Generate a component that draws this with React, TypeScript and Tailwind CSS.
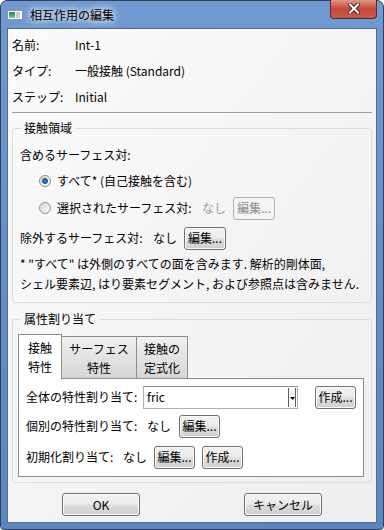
import React from 'react';

const Btn: React.FC<{ label: string; className?: string; disabled?: boolean }> = ({ label, className = '', disabled }) => (
  <button
    disabled={disabled}
    className={
      disabled
        ? `flex h-[23px] items-center justify-center rounded-[3px] border border-[#adb2b5] bg-[#f4f4f4] text-[#8d8d8d] ${className}`
        : `flex h-[23px] items-center justify-center rounded-[3px] border border-[#707070] bg-[linear-gradient(#f2f2f2_0%,#ebebeb_48%,#dddddd_52%,#cfcfcf_100%)] shadow-[inset_0_0_0_1px_#fbfbfb] ${className}`
    }
  >
    {label}
  </button>
);

const Radio: React.FC<{ checked?: boolean }> = ({ checked }) => (
  <span className="flex h-[12px] w-[12px] items-center justify-center rounded-full border border-[#8e8f8f] bg-linear-to-br from-[#d8d8d8] to-[#fbfbfb]">
    {checked && <span className="h-[6px] w-[6px] rounded-full border border-[#16487e] bg-[#2f7ac4]" />}
  </span>
);

const Tab: React.FC<{ top: string; bottom: string; active?: boolean; className?: string }> = ({ top, bottom, active, className = '' }) => (
  <div
    className={
      active
        ? `relative z-10 mb-[-1px] flex h-[45px] flex-col items-center justify-center border border-b-0 border-[#898c95] bg-white leading-[19px] ${className}`
        : `flex h-[42px] flex-col items-center justify-center border-t border-r border-[#898c95] bg-linear-to-b from-[#f0f0f0] to-[#d6d6d6] leading-[19px] ${className}`
    }
  >
    <span>{top}</span>
    <span>{bottom}</span>
  </div>
);

export default function App() {
  return (
    <div className="h-[530px] w-[384px] font-['Noto_Sans_CJK_JP',sans-serif] text-[12px] text-black">
      <div className="flex h-full flex-col rounded-t-[7px] rounded-b-[4px] border border-[#30415a] bg-linear-to-b from-[#7199d1] to-[#5b84c1] px-[6px] pb-[6px]">
        {/* Title bar */}
        <div className="flex h-[27px] items-center">
          <div className="flex h-[10px] w-[16px] gap-[1px] border border-[#8797ad] bg-white p-[1px]">
            <span className="w-[6px] bg-linear-to-b from-[#2b7f6a] to-[#7cc0a8]" />
            <span className="w-[4px] bg-[#c3c9d2]" />
          </div>
          <span className="ml-[7px] [text-shadow:0_0_6px_#ffffff,0_0_10px_#ffffff]">相互作用の編集</span>
          <div className="mt-[-2px] ml-auto flex h-[20px] w-[47px] items-center justify-center self-start rounded-b-[4px] border border-t-0 border-[#5a2b2b] bg-linear-to-b from-[#e5a090] via-[#c8473a] to-[#c75a48]">
            <svg width="12" height="11" viewBox="0 0 12 11">
              <path d="M2 1.5 L10 9.5 M10 1.5 L2 9.5" stroke="#4a2424" strokeWidth="4" strokeLinecap="square" />
              <path d="M2 1.5 L10 9.5 M10 1.5 L2 9.5" stroke="#ffffff" strokeWidth="2" strokeLinecap="square" />
            </svg>
          </div>
        </div>

        {/* Client */}
        <div className="flex flex-1 flex-col border border-[#566a89] bg-linear-to-br from-[#fbfbfb] to-[#eeeeee] px-[4px] pt-[3px]">
          <div className="flex h-[26px] items-center">
            <span className="w-[63px]">名前:</span>
            <span>Int-1</span>
          </div>
          <div className="flex h-[26px] items-center">
            <span className="w-[63px]">タイプ:</span>
            <span>一般接触 (Standard)</span>
          </div>
          <div className="flex h-[26px] items-center">
            <span className="w-[63px]">ステップ:</span>
            <span>Initial</span>
          </div>
          <div className="mt-[2px] h-px bg-[#a0a0a0]" />

          {/* 接触領域 */}
          <fieldset className="mt-[7px] rounded-[3px] border border-[#d5dfe5]">
            <legend className="ml-[8px] px-[3px] leading-[16px]">接触領域</legend>
            <div className="pt-[6px] pb-[8px] pl-[7px]">
              <div className="flex h-[26px] items-center">含めるサーフェス対:</div>
              <div className="flex h-[26px] items-center pl-[19px]">
                <Radio checked />
                <span className="ml-[6px]">すべて* (自己接触を含む)</span>
              </div>
              <div className="flex h-[28px] items-center pl-[19px]">
                <Radio />
                <span className="ml-[6px] w-[145px]">選択されたサーフェス対:</span>
                <span className="w-[31px] text-[#a0a0a0]">なし</span>
                <Btn label="編集..." disabled className="w-[42px]" />
              </div>
              <div className="flex h-[32px] items-center">
                <span className="w-[133px]">除外するサーフェス対:</span>
                <span className="w-[31px]">なし</span>
                <Btn label="編集..." className="w-[42px]" />
              </div>
              <div className="leading-[20px]">
                <div>* "すべて" は外側のすべての面を含みます. 解析的剛体面,</div>
                <div>シェル要素辺, はり要素セグメント, および参照点は含みません.</div>
              </div>
            </div>
          </fieldset>

          {/* 属性割り当て */}
          <fieldset className="mt-[8px] rounded-[3px] border border-[#d5dfe5]">
            <legend className="ml-[8px] px-[3px] leading-[16px]">属性割り当て</legend>
            <div className="pt-[7px] pr-[7px] pb-[5px] pl-[5px]">
              <div className="flex items-end">
                <Tab top="接触" bottom="特性" active className="w-[44px]" />
                <Tab top="サーフェス" bottom="特性" className="w-[75px]" />
                <Tab top="接触の" bottom="定式化" className="w-[51px]" />
              </div>
              <div className="h-[99px] border border-[#898c95] bg-white pt-[6px] pl-[7px]">
                <div className="flex h-[24px] items-center">
                  <span className="w-[117px]">全体の特性割り当て:</span>
                  <div className="flex h-[23px] w-[155px] items-center justify-between border border-[#abadb3] border-t-[#8e8f8f] bg-white pl-[3px] pr-[1px]">
                    <span>fric</span>
                    <span className="flex h-[19px] w-[8px] items-center justify-center border-x border-[#5f5f5f] bg-[#f7f7f7]">
                      <svg width="5" height="4" viewBox="0 0 5 4" className="mt-[4px]">
                        <path d="M0 0 L5 0 L2.5 3 Z" fill="#000" />
                      </svg>
                    </span>
                  </div>
                  <Btn label="作成..." className="ml-[17px] w-[41px]" />
                </div>
                <div className="mt-[5px] flex h-[24px] items-center">
                  <span className="w-[121px]">個別の特性割り当て:</span>
                  <span className="w-[32px]">なし</span>
                  <Btn label="編集..." className="w-[41px]" />
                </div>
                <div className="mt-[7px] flex h-[24px] items-center">
                  <span className="w-[97px]">初期化割り当て:</span>
                  <span className="w-[31px]">なし</span>
                  <Btn label="編集..." className="w-[41px]" />
                  <Btn label="作成..." className="ml-[7px] w-[41px]" />
                </div>
              </div>
            </div>
          </fieldset>

          <div className="mt-[10px] flex">
            <Btn label="OK" className="ml-[50px] w-[78px]" />
            <Btn label="キャンセル" className="ml-[104px] w-[78px]" />
          </div>
        </div>
      </div>
    </div>
  );
}
